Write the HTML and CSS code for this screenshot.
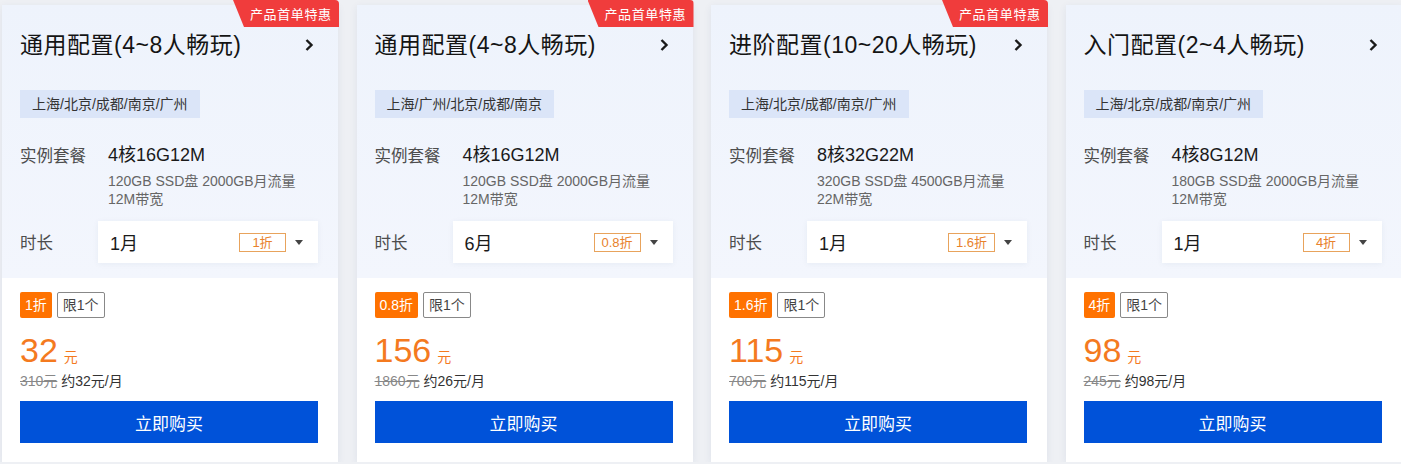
FILE: index.html
```html
<!DOCTYPE html>
<html lang="zh-CN">
<head>
<meta charset="utf-8">
<title>配置</title>
<link rel="stylesheet" href="styles.css">
</head>
<body>
<div class="cards">
  <div class="card">
    <div class="ribbon">产品首单特惠</div>
    <div class="top">
      <div class="title-row"><span class="title">通用配置(4~8人畅玩)</span><svg class="chev" width="10" height="14" viewBox="0 0 10 14"><path d="M2.5 2 L7.5 7 L2.5 12" fill="none" stroke="#1a1a1a" stroke-width="2.4"/></svg></div>
      <div class="region">上海/北京/成都/南京/广州</div>
      <div class="pkg"><span class="pkg-label">实例套餐</span><div class="pkg-info"><div class="pkg-val">4核16G12M</div><div class="pkg-sub">120GB SSD盘 2000GB月流量<br>12M带宽</div></div></div>
      <div class="dur"><span class="dur-label">时长</span><div class="select"><span class="sel-text">1月</span><span class="sel-badge">1折</span><span class="caret"></span></div></div>
    </div>
    <div class="bottom">
      <div class="tags"><span class="tag-disc">1折</span><span class="tag-limit">限1个</span></div>
      <div class="price"><span class="num">32</span><span class="unit">元</span></div>
      <div class="orig"><s>310元</s> 约32元/月</div>
      <button class="buy">立即购买</button>
    </div>
  </div>
  <div class="card">
    <div class="ribbon">产品首单特惠</div>
    <div class="top">
      <div class="title-row"><span class="title">通用配置(4~8人畅玩)</span><svg class="chev" width="10" height="14" viewBox="0 0 10 14"><path d="M2.5 2 L7.5 7 L2.5 12" fill="none" stroke="#1a1a1a" stroke-width="2.4"/></svg></div>
      <div class="region">上海/广州/北京/成都/南京</div>
      <div class="pkg"><span class="pkg-label">实例套餐</span><div class="pkg-info"><div class="pkg-val">4核16G12M</div><div class="pkg-sub">120GB SSD盘 2000GB月流量<br>12M带宽</div></div></div>
      <div class="dur"><span class="dur-label">时长</span><div class="select"><span class="sel-text">6月</span><span class="sel-badge">0.8折</span><span class="caret"></span></div></div>
    </div>
    <div class="bottom">
      <div class="tags"><span class="tag-disc">0.8折</span><span class="tag-limit">限1个</span></div>
      <div class="price"><span class="num">156</span><span class="unit">元</span></div>
      <div class="orig"><s>1860元</s> 约26元/月</div>
      <button class="buy">立即购买</button>
    </div>
  </div>
  <div class="card">
    <div class="ribbon">产品首单特惠</div>
    <div class="top">
      <div class="title-row"><span class="title">进阶配置(10~20人畅玩)</span><svg class="chev" width="10" height="14" viewBox="0 0 10 14"><path d="M2.5 2 L7.5 7 L2.5 12" fill="none" stroke="#1a1a1a" stroke-width="2.4"/></svg></div>
      <div class="region">上海/北京/成都/南京/广州</div>
      <div class="pkg"><span class="pkg-label">实例套餐</span><div class="pkg-info"><div class="pkg-val">8核32G22M</div><div class="pkg-sub">320GB SSD盘 4500GB月流量<br>22M带宽</div></div></div>
      <div class="dur"><span class="dur-label">时长</span><div class="select"><span class="sel-text">1月</span><span class="sel-badge">1.6折</span><span class="caret"></span></div></div>
    </div>
    <div class="bottom">
      <div class="tags"><span class="tag-disc">1.6折</span><span class="tag-limit">限1个</span></div>
      <div class="price"><span class="num">115</span><span class="unit">元</span></div>
      <div class="orig"><s>700元</s> 约115元/月</div>
      <button class="buy">立即购买</button>
    </div>
  </div>
  <div class="card">
    <div class="top">
      <div class="title-row"><span class="title">入门配置(2~4人畅玩)</span><svg class="chev" width="10" height="14" viewBox="0 0 10 14"><path d="M2.5 2 L7.5 7 L2.5 12" fill="none" stroke="#1a1a1a" stroke-width="2.4"/></svg></div>
      <div class="region">上海/北京/成都/南京/广州</div>
      <div class="pkg"><span class="pkg-label">实例套餐</span><div class="pkg-info"><div class="pkg-val">4核8G12M</div><div class="pkg-sub">180GB SSD盘 2000GB月流量<br>12M带宽</div></div></div>
      <div class="dur"><span class="dur-label">时长</span><div class="select"><span class="sel-text">1月</span><span class="sel-badge">4折</span><span class="caret"></span></div></div>
    </div>
    <div class="bottom">
      <div class="tags"><span class="tag-disc">4折</span><span class="tag-limit">限1个</span></div>
      <div class="price"><span class="num">98</span><span class="unit">元</span></div>
      <div class="orig"><s>245元</s> 约98元/月</div>
      <button class="buy">立即购买</button>
    </div>
  </div>
</div>
</body>
</html>
```
FILE: styles.css
```css
html, body {
  margin: 0;
  padding: 0;
  background: #eef0f4;
  font-family: "Liberation Sans", "Noto Sans CJK SC", sans-serif;
  color: #1a1a1a;
}
.cards {
  display: flex;
  gap: 18.5px;
  padding: 5px 0 0 2px;
  width: 1420px;
}
.card {
  position: relative;
  flex: none;
  width: 336px;
  height: 457px;
  background: #fff;
  box-shadow: 0 2px 8px rgba(40, 60, 110, 0.08);
  display: flex;
  flex-direction: column;
}
.ribbon {
  position: absolute;
  top: -5px;
  right: -1px;
  width: 106px;
  height: 27px;
  box-sizing: border-box;
  padding-left: 17px;
  background: #f03c3c;
  color: #fff;
  font-size: 13px;
  line-height: 27px;
  letter-spacing: 0.6px;
  font-family: "Noto Sans CJK SC", sans-serif;
  clip-path: polygon(0 0, 100% 0, 100% 100%, 11px 100%);
  border-top-right-radius: 4px;
}
.top {
  height: 273px;
  box-sizing: border-box;
  padding: 24px 20px 0 18px;
  background: linear-gradient(180deg, #eef3fc 0%, #f3f6fd 100%);
}
.title-row {
  display: flex;
  align-items: center;
  justify-content: space-between;
  padding-right: 4px;
  height: 32px;
}
.title {
  font-size: 23px;
  line-height: 32px;
  color: #141414;
  letter-spacing: 0.5px;
  font-family: "Liberation Sans", "Noto Sans CJK SC", sans-serif;
  font-weight: 400;
}
.chev { display: block; }
.region {
  display: inline-block;
  margin-top: 29px;
  height: 28px;
  line-height: 28px;
  padding: 0 12px;
  background: #dbe5f8;
  color: #333;
  font-size: 14px;
  font-family: "Liberation Sans", "Noto Sans CJK SC", sans-serif;
}
.pkg {
  display: flex;
  margin-top: 26px;
}
.pkg-label {
  width: 88px;
  flex: none;
  font-size: 16.5px;
  line-height: 22px;
  color: #4d4d4d;
  font-family: "Noto Sans CJK SC", sans-serif;
}
.pkg-val {
  font-size: 18px;
  line-height: 22px;
  color: #1a1a1a;
  font-family: "Liberation Sans", "Noto Sans CJK SC", sans-serif;
}
.pkg-sub {
  margin-top: 6px;
  font-size: 14px;
  line-height: 18px;
  color: #666;
  font-family: "Liberation Sans", "Noto Sans CJK SC", sans-serif;
}
.dur {
  display: flex;
  align-items: center;
  margin-top: 13px;
}
.dur-label {
  width: 78px;
  flex: none;
  font-size: 16.5px;
  color: #4d4d4d;
  font-family: "Noto Sans CJK SC", sans-serif;
}
.select {
  width: 220px;
  height: 42px;
  box-sizing: border-box;
  background: #fff;
  box-shadow: 0 1px 6px rgba(40, 60, 110, 0.06);
  display: flex;
  align-items: center;
  padding: 0 15px 0 12px;
}
.sel-text {
  flex: 1;
  font-size: 18px;
  color: #1a1a1a;
  font-family: "Liberation Sans", "Noto Sans CJK SC", sans-serif;
}
.sel-badge {
  min-width: 47px;
  height: 19px;
  box-sizing: border-box;
  border: 1px solid #e8a35c;
  color: #e8822c;
  font-size: 13px;
  line-height: 17px;
  text-align: center;
  padding: 0 4px;
  font-family: "Liberation Sans", "Noto Sans CJK SC", sans-serif;
  margin-right: 9px;
}
.caret {
  width: 0;
  height: 0;
  border-left: 4.5px solid transparent;
  border-right: 4.5px solid transparent;
  border-top: 5px solid #444;
}
.bottom {
  padding: 14px 20px 0 18px;
  display: flex;
  flex-direction: column;
}
.tags {
  display: flex;
  gap: 5px;
  height: 26px;
}
.tag-disc {
  background: #ff7200;
  color: #fff;
  font-size: 14px;
  line-height: 26px;
  padding: 0 5px;
  border-radius: 2px;
  font-family: "Liberation Sans", "Noto Sans CJK SC", sans-serif;
}
.tag-limit {
  box-sizing: border-box;
  border: 1px solid #888;
  color: #444;
  font-size: 14px;
  line-height: 24px;
  padding: 0 5px;
  border-radius: 2px;
  font-family: "Liberation Sans", "Noto Sans CJK SC", sans-serif;
}
.price {
  margin-top: 14px;
  height: 36px;
  display: flex;
  align-items: baseline;
  color: #f47a1f;
}
.num {
  font-size: 34px;
  line-height: 36px;
  font-family: "Liberation Sans", sans-serif;
}
.unit {
  font-size: 14px;
  margin-left: 6px;
  font-family: "Noto Sans CJK SC", sans-serif;
}
.orig {
  margin-top: 3px;
  font-size: 14px;
  line-height: 20px;
  color: #333;
  font-family: "Liberation Sans", "Noto Sans CJK SC", sans-serif;
}
.orig s {
  color: #888;
}
.buy {
  margin-top: 10px;
  height: 42px;
  width: 100%;
  border: none;
  background: #0052d9;
  color: #fff;
  font-size: 17px;
  font-family: "Noto Sans CJK SC", sans-serif;
  padding: 0;
  cursor: pointer;
}
```
